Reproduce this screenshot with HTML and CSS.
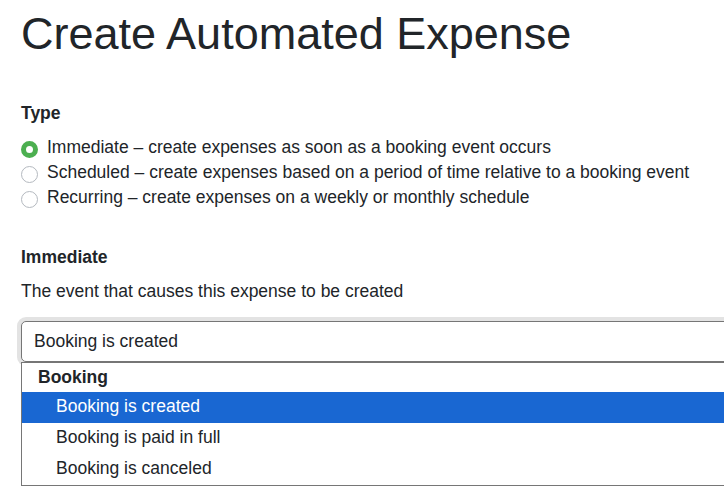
FILE: index.html
```html
<!DOCTYPE html>
<html>
<head>
<meta charset="utf-8">
<link rel="stylesheet" href="styles.css">
</head>
<body>
<div class="page">
  <h1 class="title">Create Automated Expense</h1>
  <div class="label">Type</div>
  <div class="radios">
    <div class="radio-row"><span class="radio checked"></span><span>Immediate – create expenses as soon as a booking event occurs</span></div>
    <div class="radio-row"><span class="radio"></span><span>Scheduled – create expenses based on a period of time relative to a booking event</span></div>
    <div class="radio-row"><span class="radio"></span><span>Recurring – create expenses on a weekly or monthly schedule</span></div>
  </div>
  <div class="label section">Immediate</div>
  <div class="help">The event that causes this expense to be created</div>
  <div class="select-wrap">
    <div class="select">Booking is created</div>
    <div class="dropdown">
      <div class="group">Booking</div>
      <div class="option active">Booking is created</div>
      <div class="option">Booking is paid in full</div>
      <div class="option">Booking is canceled</div>
    </div>
  </div>
</div>
</body>
</html>
```

FILE: styles.css
```css
html {
  overflow: hidden;
}
body {
  margin: 0;
  padding: 0;
  min-height: 486px;
  background: #ffffff;
  font-family: "Liberation Sans", Arial, sans-serif;
  font-size: 17.5px;
  color: #212529;
}
.page {
  padding: 7px 0 0 21px;
}
.title {
  margin: 0 0 40px;
  font-size: 45px;
  font-weight: 400;
  line-height: 54px;
  white-space: nowrap;
}
.label {
  font-weight: 700;
  line-height: 24px;
  margin-bottom: 9.5px;
}
.radio-row {
  display: flex;
  align-items: flex-start;
  line-height: 25px;
  white-space: nowrap;
}
.radio {
  flex: none;
  box-sizing: border-box;
  width: 17px;
  height: 17px;
  margin-top: 6.5px;
  margin-right: 9px;
  border-radius: 50%;
  border: 1px solid #b4b9bf;
  background: #fff;
}
.radio.checked {
  border: 5.5px solid #4caf50;
  background: #fff;
}
.label.section {
  margin-top: 35.5px;
  margin-bottom: 10px;
}
.help {
  line-height: 24px;
}
.select-wrap {
  position: relative;
  margin-top: 18px;
  width: 760px;
}
.select {
  box-sizing: border-box;
  height: 41px;
  line-height: 39px;
  padding-left: 12px;
  border: 1px solid #767676;
  border-radius: 5px;
  box-shadow: 0 0 0 4px #e3e3e3;
  background: #fff;
}
.dropdown {
  position: absolute;
  top: 100%;
  left: 0;
  right: 0;
  border: 1px solid #767676;
  background: #fff;
}
.group {
  height: 29px;
  line-height: 29px;
  padding-left: 16px;
  font-weight: 700;
}
.option {
  height: 31px;
  line-height: 29px;
  padding-left: 34px;
}
.option.active {
  background: #1967d2;
  color: #fff;
}
```
